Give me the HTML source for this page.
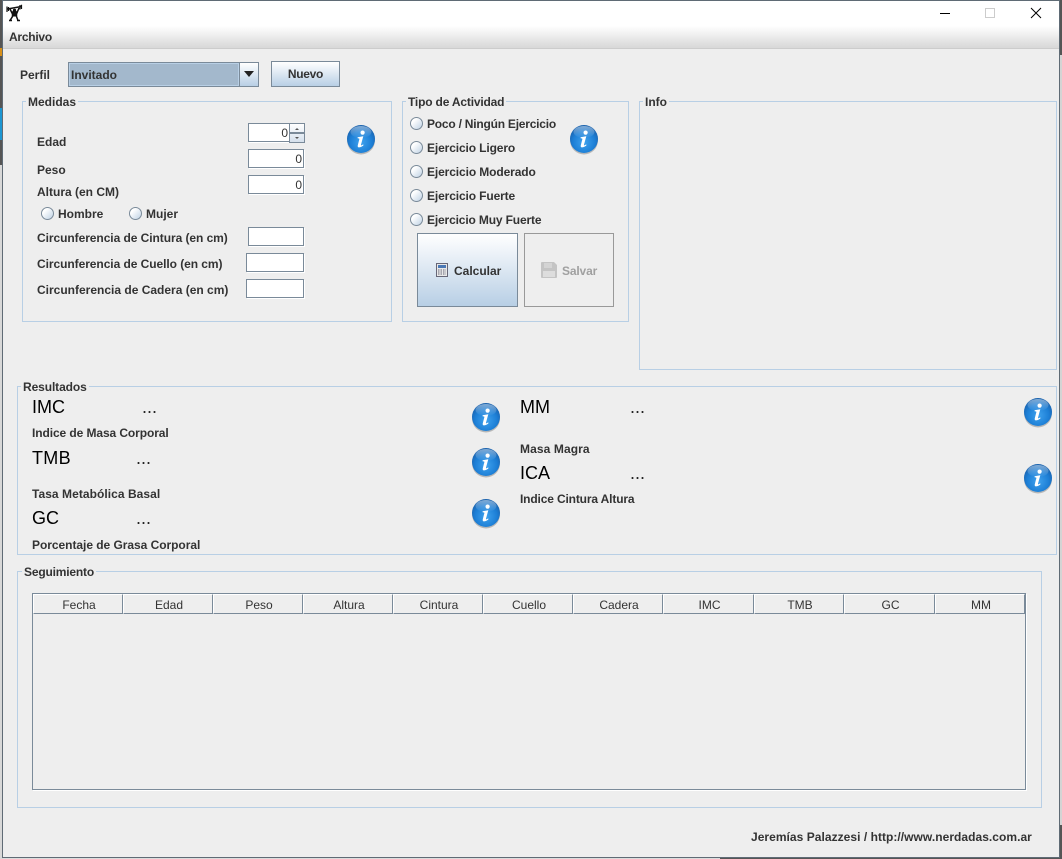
<!DOCTYPE html>
<html lang="es"><head><meta charset="utf-8"><title>Archivo</title>
<style>
html,body{margin:0;padding:0;width:1062px;height:859px;overflow:hidden;background:#dcdcdc}
body{position:relative;font:bold 12px/14px "Liberation Sans",Arial,sans-serif;color:#333}
div,span,svg{position:absolute;box-sizing:border-box}
.t{white-space:nowrap}
.n{font-weight:normal}
.big{font-weight:normal;font-size:18px;line-height:20px;color:#000;white-space:nowrap}
.dots{font-weight:normal;font-size:18px;line-height:16px;color:#222;white-space:nowrap}
.box{border:1px solid #b8cfe5}
.tf{background:#fff;border:1px solid #7a8a99;box-shadow:1px 1px 0 #fff}
.tf span{right:1px;top:2px;font-weight:normal;font-size:12px;color:#333}
.r{width:13px;height:13px;border-radius:50%;border:1px solid #7a8a99;background:linear-gradient(135deg,#fff 25%,#c8d8e8 90%)}
.th{top:594px;height:20px;padding-left:2px;border-right:1px solid #7a8a99;border-bottom:1px solid #7a8a99;border-left:1px solid #fff;border-top:1px solid #fff;text-align:center;font-weight:normal;line-height:20px;color:#333}
.i{width:30px;height:31px}
</style></head><body>
<svg width="0" height="0" style="left:0;top:0"><defs>
<radialGradient id="g" cx="50%" cy="62%" r="60%"><stop offset="0" stop-color="#3fa2ee"/><stop offset=".65" stop-color="#1d7fd6"/><stop offset="1" stop-color="#1a62ad"/></radialGradient>
<linearGradient id="h" x1="0" y1="0" x2="0" y2="1"><stop offset="0" stop-color="#fff" stop-opacity=".45"/><stop offset="1" stop-color="#fff" stop-opacity="0"/></linearGradient>
<symbol id="info" viewBox="0 0 30 31">
<ellipse cx="15" cy="16.5" rx="14" ry="14" fill="#8a8a8a" opacity=".55"/>
<circle cx="15" cy="15" r="14" fill="url(#g)"/>
<ellipse cx="15" cy="8" rx="10.5" ry="6" fill="url(#h)"/>
<circle cx="16.6" cy="8.6" r="2.1" fill="#fff"/>
<path d="M11.6 13.2 L17.3 12.3 L15 20.6 Q14.8 21.6 15.6 21.3 L17.2 20.4 L17.5 21.2 Q15 23.4 12.9 23.4 Q11.3 23.2 11.8 21.2 L13.4 15 Q13.5 14.2 11.6 14.2Z" fill="#fff"/>
</symbol></defs></svg>

<!-- desktop behind the window -->
<div style="left:0;top:0;width:3px;height:165px;background:#555"></div>
<div style="left:0;top:48px;width:3px;height:8px;background:#d8901a"></div>
<div style="left:0;top:108px;width:3px;height:32px;background:#1c96d2"></div>
<div style="left:0;top:165px;width:3px;height:694px;background:#d8d8d8"></div>
<div style="left:1059px;top:0;width:3px;height:55px;background:#555"></div>
<div style="left:1059px;top:55px;width:3px;height:770px;background:#d4d4d4"></div>
<div style="left:1059px;top:825px;width:3px;height:34px;background:#555"></div>
<div style="left:0;top:0;width:1062px;height:1px;background:#555"></div>
<div style="left:720px;top:856px;width:342px;height:3px;background:#555"></div>

<!-- window -->
<div style="left:2px;top:0;width:1058px;height:858px;border:1px solid #5f6b75;background:#eee"></div>
<div style="left:3px;top:1px;width:1056px;height:47px;background:linear-gradient(#fff 0,#fff 25px,#d9d9d9 46px)"></div>
<div style="left:3px;top:48px;width:1056px;height:1px;background:#ccc"></div>

<svg style="left:6px;top:4px" width="17" height="18" viewBox="0 0 17 18">
<path d="M1.5 5 L15.5 2.5" stroke="#111" stroke-width="1.4"/>
<path d="M1 2.5V8M2.5 3V7M14 1V5.5M15.5 .8V5" stroke="#111" stroke-width="1.2"/>
<path d="M4 5 L6.5 10 H10.5 L13 4 M6.5 10 V12.5 L4 16.5 M10.5 10 V12.5 L12 16.5 M6 16.5H3M14 16.5H11" stroke="#111" stroke-width="1.5" fill="none"/>
<rect x="6.3" y="7" width="4.4" height="5.5" fill="#111"/><circle cx="8.5" cy="6.5" r="1.7" fill="#111"/>
</svg>
<svg style="left:935px;top:5px" width="110" height="18" viewBox="0 0 110 18">
<path d="M5 8.5H15" stroke="#000" stroke-width="1"/>
<rect x="50.5" y="3.5" width="9" height="9" fill="none" stroke="#ccc"/>
<path d="M96 3L106 13M106 3L96 13" stroke="#000" stroke-width="1" fill="none"/>
</svg>

<span class="t" style="left:9px;top:30px;letter-spacing:-.25px">Archivo</span>

<!-- perfil -->
<span class="t" style="left:20px;top:68px">Perfil</span>
<div style="left:68px;top:62px;width:191px;height:25px;border:1px solid #7a8a99;background:#a3b8cc"></div>
<div style="left:69px;top:63px;width:170px;height:23px;border:1px solid #b8cfe5"></div>
<div style="left:239px;top:63px;width:19px;height:23px;border-left:1px solid #7a8a99;background:linear-gradient(#fff,#b8cfe5)"></div>
<svg style="left:244px;top:71px" width="10" height="6"><path d="M0 0H10L5 6Z" fill="#222"/></svg>
<span class="t" style="left:71px;top:68px">Invitado</span>
<div style="left:271px;top:61px;width:69px;height:26px;border:1px solid #7a8a99;background:linear-gradient(#fff,#b8cfe5);text-align:center;line-height:25px;letter-spacing:-.3px">Nuevo</div>

<!-- medidas -->
<div class="box" style="left:22px;top:101px;width:370px;height:221px"></div>
<span class="t" style="left:26px;top:95px;padding:0 2px;background:#eee">Medidas</span>
<span class="t" style="left:37px;top:135px">Edad</span>
<span class="t" style="left:37px;top:163px">Peso</span>
<span class="t" style="left:37px;top:185px">Altura (en CM)</span>
<div class="tf" style="left:248px;top:123px;width:42px;height:19px"><span>0</span></div>
<div style="left:289px;top:123px;width:16px;height:20px;border:1px solid #7a8a99;background:linear-gradient(#fff,#d5e0ec)"></div>
<div style="left:289px;top:132px;width:16px;height:2px;background:#7a8a99"></div>
<svg style="left:294px;top:127px" width="6" height="14"><path d="M1 3H5L3 1ZM1 10H5L3 12Z" fill="#555"/></svg>
<div class="tf" style="left:248px;top:149px;width:56px;height:19px"><span>0</span></div>
<div class="tf" style="left:248px;top:175px;width:56px;height:19px"><span>0</span></div>
<div class="r" style="left:41px;top:207px"></div><span class="t" style="left:58px;top:207px">Hombre</span>
<div class="r" style="left:129px;top:207px"></div><span class="t" style="left:146px;top:207px">Mujer</span>
<span class="t" style="left:37px;top:231px;letter-spacing:-.06px">Circunferencia de Cintura (en cm)</span>
<span class="t" style="left:37px;top:257px;letter-spacing:-.06px">Circunferencia de Cuello (en cm)</span>
<span class="t" style="left:37px;top:283px">Circunferencia de Cadera (en cm)</span>
<div class="tf" style="left:248px;top:227px;width:56px;height:19px"></div>
<div class="tf" style="left:246px;top:253px;width:58px;height:19px"></div>
<div class="tf" style="left:246px;top:279px;width:58px;height:19px"></div>
<svg class="i" style="left:346px;top:124px"><use href="#info"/></svg>

<!-- actividad -->
<div class="box" style="left:402px;top:101px;width:227px;height:221px"></div>
<span class="t" style="left:406px;top:95px;padding:0 2px;background:#eee;letter-spacing:-.18px">Tipo de Actividad</span>
<div class="r" style="left:410px;top:117px"></div><span class="t" style="left:427px;top:117px;letter-spacing:-.22px">Poco / Ningún Ejercicio</span>
<div class="r" style="left:410px;top:141px"></div><span class="t" style="left:427px;top:141px;letter-spacing:-.12px">Ejercicio Ligero</span>
<div class="r" style="left:410px;top:165px"></div><span class="t" style="left:427px;top:165px;letter-spacing:-.11px">Ejercicio Moderado</span>
<div class="r" style="left:410px;top:189px"></div><span class="t" style="left:427px;top:189px;letter-spacing:-.12px">Ejercicio Fuerte</span>
<div class="r" style="left:410px;top:213px"></div><span class="t" style="left:427px;top:213px;letter-spacing:-.15px">Ejercicio Muy Fuerte</span>
<svg class="i" style="left:569px;top:124px"><use href="#info"/></svg>
<div style="left:417px;top:233px;width:101px;height:74px;border:1px solid #7a8a99;background:linear-gradient(#fff,#b8cfe5)"></div>
<svg style="left:436px;top:263px" width="12" height="14"><rect x=".5" y=".5" width="11" height="13" fill="#e8e8e8" stroke="#667"/><rect x="2" y="2" width="8" height="3" fill="#4a78b5"/><path d="M2 7H10M2 9H10M2 11H10" stroke="#667" stroke-dasharray="1.5 1"/></svg>
<span class="t" style="left:454px;top:264px">Calcular</span>
<div style="left:524px;top:233px;width:90px;height:74px;border:1px solid #999"></div>
<svg style="left:541px;top:262px" width="16" height="16"><path d="M0 1Q0 0 1 0H13L16 3V15Q16 16 15 16H1Q0 16 0 15Z" fill="#c4c4c4"/><rect x="3" y="1" width="8" height="5" fill="#d4d4d4"/><rect x="2" y="9" width="12" height="6" fill="#ddd"/></svg>
<span class="t" style="left:562px;top:264px;color:#a0a0a0;letter-spacing:-.15px">Salvar</span>

<!-- info -->
<div class="box" style="left:639px;top:101px;width:418px;height:269px"></div>
<span class="t" style="left:643px;top:95px;padding:0 2px;background:#eee">Info</span>

<!-- resultados -->
<div class="box" style="left:17px;top:386px;width:1040px;height:169px"></div>
<span class="t" style="left:21px;top:380px;padding:0 2px;background:#eee;letter-spacing:-.1px">Resultados</span>
<span class="big" style="left:32px;top:397px">IMC</span><span class="dots" style="left:142px;top:399px">...</span>
<span class="t" style="left:32px;top:426px;letter-spacing:-.09px">Indice de Masa Corporal</span>
<span class="big" style="left:32px;top:448px;letter-spacing:.3px">TMB</span><span class="dots" style="left:136px;top:450px">...</span>
<span class="t" style="left:32px;top:487px;letter-spacing:.05px">Tasa Metabólica Basal</span>
<span class="big" style="left:32px;top:508px">GC</span><span class="dots" style="left:136px;top:510px">...</span>
<span class="t" style="left:32px;top:538px;letter-spacing:-.04px">Porcentaje de Grasa Corporal</span>
<span class="big" style="left:520px;top:397px">MM</span><span class="dots" style="left:630px;top:399px">...</span>
<span class="t" style="left:520px;top:442px;letter-spacing:.1px">Masa Magra</span>
<span class="big" style="left:520px;top:463px">ICA</span><span class="dots" style="left:630px;top:465px">...</span>
<span class="t" style="left:520px;top:492px;letter-spacing:-.15px">Indice Cintura Altura</span>
<svg class="i" style="left:471px;top:402px"><use href="#info"/></svg>
<svg class="i" style="left:471px;top:447px"><use href="#info"/></svg>
<svg class="i" style="left:471px;top:498px"><use href="#info"/></svg>
<svg class="i" style="left:1023px;top:397px"><use href="#info"/></svg>
<svg class="i" style="left:1023px;top:463px"><use href="#info"/></svg>

<!-- seguimiento -->
<div class="box" style="left:17px;top:571px;width:1025px;height:237px"></div>
<span class="t" style="left:22px;top:565px;padding:0 2px;background:#eee;letter-spacing:-.18px">Seguimiento</span>
<div style="left:32px;top:593px;width:994px;height:197px;border:1px solid #7a8a99;box-shadow:1px 1px 0 #fff"></div>
<div class="th" style="left:33px;width:90px">Fecha</div>
<div class="th" style="left:123px;width:90px">Edad</div>
<div class="th" style="left:213px;width:90px">Peso</div>
<div class="th" style="left:303px;width:90px">Altura</div>
<div class="th" style="left:393px;width:90px">Cintura</div>
<div class="th" style="left:483px;width:90px">Cuello</div>
<div class="th" style="left:573px;width:90px">Cadera</div>
<div class="th" style="left:663px;width:91px">IMC</div>
<div class="th" style="left:754px;width:90px">TMB</div>
<div class="th" style="left:844px;width:91px">GC</div>
<div class="th" style="left:935px;width:90px">MM</div>

<span class="t" style="left:751px;top:830px;letter-spacing:.04px">Jeremías Palazzesi / http://www.nerdadas.com.ar</span>
</body></html>
